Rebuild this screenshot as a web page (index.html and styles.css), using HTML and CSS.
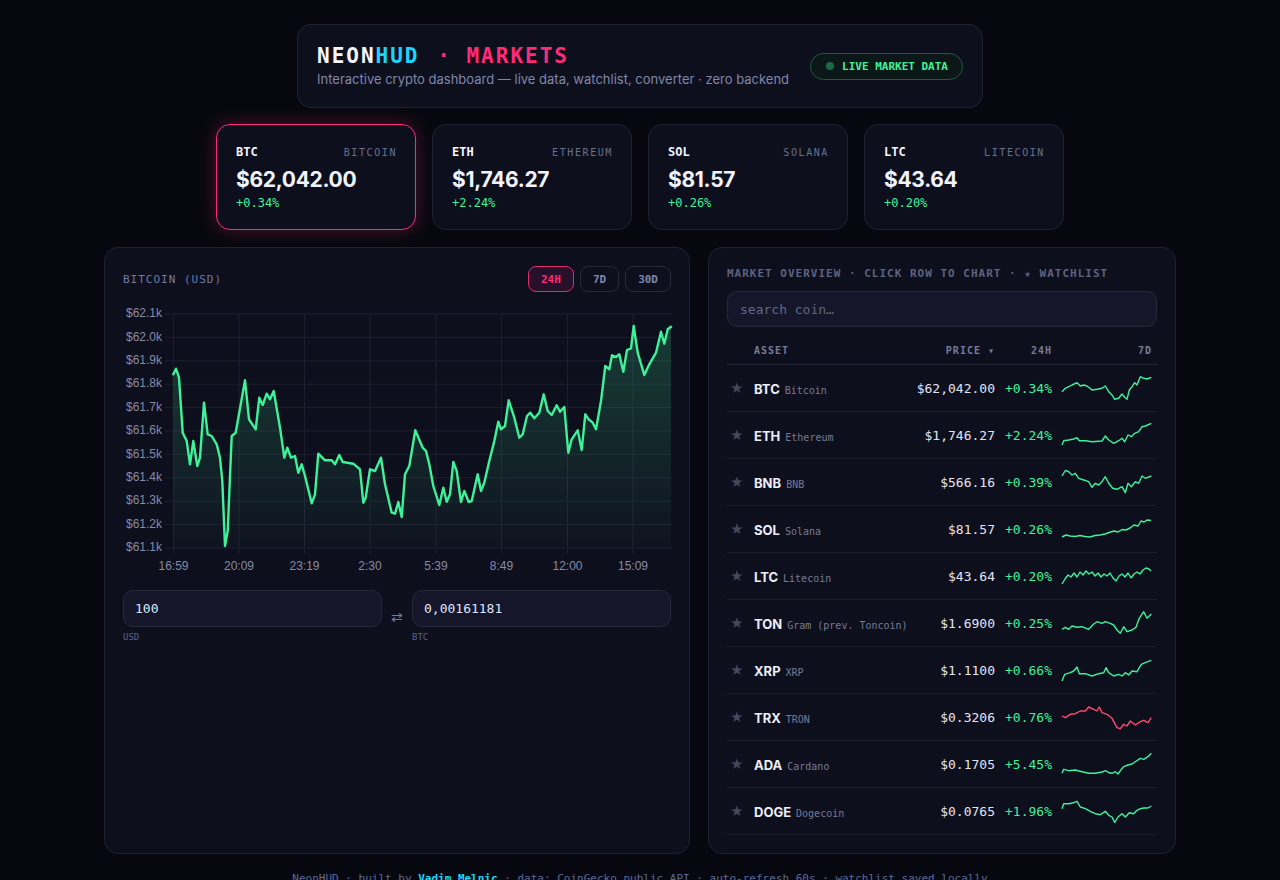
FILE: index.html
```html
<!DOCTYPE html>
<html lang="en">
<head>
  <meta charset="UTF-8">
  <meta name="viewport" content="width=device-width, initial-scale=1.0">
  <title>NeonHUD · Markets</title>
  <link rel="stylesheet" href="styles.css">
</head>
<body>
<div class="page">

  <header class="hud-head">
    <div class="head-text">
      <h1 class="brand"><span class="b-neon">NEON</span><span class="b-hud">HUD</span> <span class="b-mk">· MARKETS</span></h1>
      <p class="sub">Interactive crypto dashboard — live data, watchlist, converter · zero backend</p>
    </div>
    <div class="live"><span class="live-dot"></span>LIVE MARKET DATA</div>
  </header>

  <section class="tickers">
    <div class="tick active">
      <div class="tick-top"><span class="tick-sym">BTC</span><span class="tick-name">BITCOIN</span></div>
      <div class="tick-price">$62,042.00</div>
      <div class="tick-chg">+0.34%</div>
    </div>
    <div class="tick">
      <div class="tick-top"><span class="tick-sym">ETH</span><span class="tick-name">ETHEREUM</span></div>
      <div class="tick-price">$1,746.27</div>
      <div class="tick-chg">+2.24%</div>
    </div>
    <div class="tick">
      <div class="tick-top"><span class="tick-sym">SOL</span><span class="tick-name">SOLANA</span></div>
      <div class="tick-price">$81.57</div>
      <div class="tick-chg">+0.26%</div>
    </div>
    <div class="tick">
      <div class="tick-top"><span class="tick-sym">LTC</span><span class="tick-name">LITECOIN</span></div>
      <div class="tick-price">$43.64</div>
      <div class="tick-chg">+0.20%</div>
    </div>
  </section>

  <main class="panels">
    <section class="panel chart-panel">
      <div class="chart-head">
        <span class="chart-title">BITCOIN (USD)</span>
        <div class="ranges">
          <button class="rng on">24H</button>
          <button class="rng">7D</button>
          <button class="rng">30D</button>
        </div>
      </div>

      <svg class="chart" viewBox="122 300 550 280" width="550" height="280">
        <defs>
          <linearGradient id="area" x1="0" y1="0" x2="0" y2="1">
            <stop offset="0" stop-color="#3ef29a" stop-opacity="0.2"/>
            <stop offset="1" stop-color="#3ef29a" stop-opacity="0.02"/>
          </linearGradient>
        </defs>
        <g class="grid">
          <line x1="164" y1="313" x2="671" y2="313"/>
          <line x1="164" y1="336.4" x2="671" y2="336.4"/>
          <line x1="164" y1="359.8" x2="671" y2="359.8"/>
          <line x1="164" y1="383.2" x2="671" y2="383.2"/>
          <line x1="164" y1="406.6" x2="671" y2="406.6"/>
          <line x1="164" y1="430" x2="671" y2="430"/>
          <line x1="164" y1="453.4" x2="671" y2="453.4"/>
          <line x1="164" y1="476.8" x2="671" y2="476.8"/>
          <line x1="164" y1="500.2" x2="671" y2="500.2"/>
          <line x1="164" y1="523.6" x2="671" y2="523.6"/>
          <line x1="164" y1="547" x2="671" y2="547"/>
          <line x1="172.5" y1="313" x2="172.5" y2="553"/>
          <line x1="238" y1="313" x2="238" y2="553"/>
          <line x1="303.5" y1="313" x2="303.5" y2="553"/>
          <line x1="369" y1="313" x2="369" y2="553"/>
          <line x1="435" y1="313" x2="435" y2="553"/>
          <line x1="500.5" y1="313" x2="500.5" y2="553"/>
          <line x1="566.5" y1="313" x2="566.5" y2="553"/>
          <line x1="632" y1="313" x2="632" y2="553"/>
        </g>
        <g class="ylab">
          <text x="161" y="313">$62.1k</text>
          <text x="161" y="336.4">$62.0k</text>
          <text x="161" y="359.8">$61.9k</text>
          <text x="161" y="383.2">$61.8k</text>
          <text x="161" y="406.6">$61.7k</text>
          <text x="161" y="430">$61.6k</text>
          <text x="161" y="453.4">$61.5k</text>
          <text x="161" y="476.8">$61.4k</text>
          <text x="161" y="500.2">$61.3k</text>
          <text x="161" y="523.6">$61.2k</text>
          <text x="161" y="547">$61.1k</text>
        </g>
        <g class="xlab">
          <text x="172.5" y="566">16:59</text>
          <text x="238" y="566">20:09</text>
          <text x="303.5" y="566">23:19</text>
          <text x="369" y="566">2:30</text>
          <text x="435" y="566">5:39</text>
          <text x="500.5" y="566">8:49</text>
          <text x="566.5" y="566">12:00</text>
          <text x="632" y="566">15:09</text>
        </g>
        <polygon class="area" points="172.3,373.3 175,367.7 178,376.7 181.7,431.7 185.7,440 189,463.3 192.3,440 196.3,465 199,456.7 203,401.7 206.7,433.3 210.7,435 215.7,443.3 219,456.7 221.3,480 224,545 226.7,530 230.7,435 234.7,431.7 244,379.3 248,418.3 254.7,428.3 258.3,396.7 261.7,404 265.7,392.7 269,398.3 272.7,390 279,426.7 283.3,456.7 286.3,446.7 290,456.7 294,455 297.3,471.7 300.7,463.3 304,475 310.7,502.3 314,493.3 317.3,452.7 324,459.3 330.7,459.3 334,463.3 338.3,454 341.7,461 352.3,462.7 359,468.3 362.3,501.7 364.7,496.7 369,468.3 374,470 380,456.7 384,483.3 390.7,511.7 394,512.7 397.3,501 400.7,516 404,473.3 408.3,465 414.3,429.3 421.7,446.7 425,450 428.3,463.3 432.3,485 438.3,504 442.3,486.7 445.7,500.7 449,493.3 452.3,461 455.7,470 460,501 463.3,490 467.7,501 470.7,500 476.7,473.3 480,490 483.3,481.7 488.3,460 493.3,440 497.3,420.7 500,428.3 504,425 507.7,399.3 513.3,416.7 518.3,436.7 521.7,433.3 526,415 529.3,411.7 533.3,417.3 538.3,411.7 542.7,393.3 546.7,410 550.7,414 555.7,404.3 559,410.7 563.3,406 567.3,451.7 570.7,438.3 576.7,429.3 580.7,449 584.3,413.3 587.7,418.3 591.7,421.7 595,428.3 600,400 604.3,365 608.3,368.3 611,354.3 615,356 618.3,353.3 622.3,370.7 626,349 630,347.3 632.7,325 636.7,351.7 643.3,374 648.3,363.3 655,351.7 660,330.7 663.3,342.7 666.7,328.3 670,325.7 670,547 172.3,547"/>
        <polyline class="line" points="172.3,373.3 175,367.7 178,376.7 181.7,431.7 185.7,440 189,463.3 192.3,440 196.3,465 199,456.7 203,401.7 206.7,433.3 210.7,435 215.7,443.3 219,456.7 221.3,480 224,545 226.7,530 230.7,435 234.7,431.7 244,379.3 248,418.3 254.7,428.3 258.3,396.7 261.7,404 265.7,392.7 269,398.3 272.7,390 279,426.7 283.3,456.7 286.3,446.7 290,456.7 294,455 297.3,471.7 300.7,463.3 304,475 310.7,502.3 314,493.3 317.3,452.7 324,459.3 330.7,459.3 334,463.3 338.3,454 341.7,461 352.3,462.7 359,468.3 362.3,501.7 364.7,496.7 369,468.3 374,470 380,456.7 384,483.3 390.7,511.7 394,512.7 397.3,501 400.7,516 404,473.3 408.3,465 414.3,429.3 421.7,446.7 425,450 428.3,463.3 432.3,485 438.3,504 442.3,486.7 445.7,500.7 449,493.3 452.3,461 455.7,470 460,501 463.3,490 467.7,501 470.7,500 476.7,473.3 480,490 483.3,481.7 488.3,460 493.3,440 497.3,420.7 500,428.3 504,425 507.7,399.3 513.3,416.7 518.3,436.7 521.7,433.3 526,415 529.3,411.7 533.3,417.3 538.3,411.7 542.7,393.3 546.7,410 550.7,414 555.7,404.3 559,410.7 563.3,406 567.3,451.7 570.7,438.3 576.7,429.3 580.7,449 584.3,413.3 587.7,418.3 591.7,421.7 595,428.3 600,400 604.3,365 608.3,368.3 611,354.3 615,356 618.3,353.3 622.3,370.7 626,349 630,347.3 632.7,325 636.7,351.7 643.3,374 648.3,363.3 655,351.7 660,330.7 663.3,342.7 666.7,328.3 670,325.7"/>
      </svg>

      <div class="convert">
        <input class="cv-in" type="text" value="100">
        <span class="swap">⇄</span>
        <input class="cv-in" type="text" value="0,00161181">
        <label class="cv-lab">USD</label>
        <span></span>
        <label class="cv-lab">BTC</label>
      </div>
    </section>

    <section class="panel market-panel">
      <div class="mk-title">MARKET OVERVIEW · CLICK ROW TO CHART · ★ WATCHLIST</div>
      <input class="search" type="text" placeholder="search coin…">

      <div class="mk-table">
        <div class="mk-row mk-head">
          <span></span>
          <span>ASSET</span>
          <span class="r">PRICE ▾</span>
          <span class="r">24H</span>
          <span class="r">7D</span>
        </div>

        <div class="mk-row">
          <span class="star">★</span>
          <span class="asset"><b>BTC</b><i>Bitcoin</i></span>
          <span class="price">$62,042.00</span>
          <span class="chg">+0.34%</span>
          <span class="spark"><svg viewBox="0 0 90 24" width="90" height="24"><polyline points="0,15.7 3.3,12.3 6.7,10.7 10,9 15,6.7 18.3,10 21.7,9 25,10 30,14 35,13.3 40,12.3 43.3,10 46.7,15.7 50,19 52.7,23.3 56.7,22.3 60,18 62.7,21.3 65,23.3 67.3,14 70,10.7 72.7,6.7 75,9 78.3,0.7 81.7,2.3 85,3 89.3,1.3"/></svg></span>
        </div>
        <div class="mk-row">
          <span class="star">★</span>
          <span class="asset"><b>ETH</b><i>Ethereum</i></span>
          <span class="price">$1,746.27</span>
          <span class="chg">+2.24%</span>
          <span class="spark"><svg viewBox="0 0 90 24" width="90" height="24"><polyline points="0,22 1.7,17.7 6.7,17 11.7,16 15,14.7 17.3,17.7 23.3,17.7 30,18.7 40,18 43.3,13 46.7,17 51.7,20.3 56.7,17.7 60,15.3 62.7,18.7 66,12 69.3,13.7 72.7,10.3 76.7,8.7 80,3.7 83.3,3 89.3,0.3"/></svg></span>
        </div>
        <div class="mk-row">
          <span class="star">★</span>
          <span class="asset"><b>BNB</b><i>BNB</i></span>
          <span class="price">$566.16</span>
          <span class="chg">+0.39%</span>
          <span class="spark"><svg viewBox="0 0 90 24" width="90" height="24"><polyline points="0,6 3.3,0.5 6.7,1.7 10,5 13.3,3.3 16.7,8.3 21.7,10 26.7,11.7 30,17.3 33.3,13.3 36.7,15 40,11.7 43.3,6.7 46.7,13.3 50.7,18.3 55,19.3 60,16.7 63.3,22.7 66,13.3 69.3,16.7 73.3,11.7 76.7,13.3 80,6 83.3,8.3 89.3,6"/></svg></span>
        </div>
        <div class="mk-row">
          <span class="star">★</span>
          <span class="asset"><b>SOL</b><i>Solana</i></span>
          <span class="price">$81.57</span>
          <span class="chg">+0.26%</span>
          <span class="spark"><svg viewBox="0 0 90 24" width="90" height="24"><polyline points="0,20 4,18 8,19 13,19.5 18,18.5 23,19.5 28,20 33,18.5 38,18 43,17 47,15.5 52,14 56,15 60,12.5 64,13 68,11 72,8 76,9 79,4 82,5 85,3 89,3.5"/></svg></span>
        </div>
        <div class="mk-row">
          <span class="star">★</span>
          <span class="asset"><b>LTC</b><i>Litecoin</i></span>
          <span class="price">$43.64</span>
          <span class="chg">+0.20%</span>
          <span class="spark"><svg viewBox="0 0 90 24" width="90" height="24"><polyline points="0,20 3,15 6,11 9,13 12,9 15,13 18,8 21,11 24,7 27,10 30,8 33,12 36,9 39,13 42,10 45,12 48,9 51,14 54,17 57,12 60,10 63,13 66,9 69,14 72,10 75,8 78,10 81,6 84,4 87,5 89,7"/></svg></span>
        </div>
        <div class="mk-row">
          <span class="star">★</span>
          <span class="asset"><b>TON</b><i>Gram (prev. Toncoin)</i></span>
          <span class="price">$1.6900</span>
          <span class="chg">+0.25%</span>
          <span class="spark"><svg viewBox="0 0 90 24" width="90" height="24"><polyline points="0,18.3 3.3,16.3 6.7,18.3 10,15 15,16.3 20,15.7 26.7,18.3 31.7,13 35,10.7 40,12.3 43.3,10.7 48.3,12.3 51.7,14 55,19 58.3,22.3 61.7,15.7 65,20.7 70,19 74,16.3 77.3,7.3 81.7,0.7 85,7.3 89.3,3"/></svg></span>
        </div>
        <div class="mk-row">
          <span class="star">★</span>
          <span class="asset"><b>XRP</b><i>XRP</i></span>
          <span class="price">$1.1100</span>
          <span class="chg">+0.66%</span>
          <span class="spark"><svg viewBox="0 0 90 24" width="90" height="24"><polyline points="0,23 2.7,16.3 8.3,14.7 11.7,13 15,9 17.3,15.7 23.3,15.7 30,18 36.7,15.7 41.7,14.7 44,9.7 46.7,14.7 51.7,18 56.7,16.3 60,18 63.3,14.7 66.7,17 70,13 75,13.7 79.3,6.3 83.3,4.7 89.3,2.3"/></svg></span>
        </div>
        <div class="mk-row">
          <span class="star">★</span>
          <span class="asset"><b>TRX</b><i>TRON</i></span>
          <span class="price">$0.3206</span>
          <span class="chg">+0.76%</span>
          <span class="spark down"><svg viewBox="0 0 90 24" width="90" height="24"><polyline points="0,11 3.3,12.7 8.3,9.3 13.3,8.7 18.3,6 23.3,6 26.7,2 31.7,4.3 35,6 37.3,2 40,7.7 45,9.3 50,13.3 55,22.7 58.3,23.7 61.7,19.3 65,21 68.3,16 73.3,20 78.3,16.7 81.7,15.3 86,17.7 89.3,12.7"/></svg></span>
        </div>
        <div class="mk-row">
          <span class="star">★</span>
          <span class="asset"><b>ADA</b><i>Cardano</i></span>
          <span class="price">$0.1705</span>
          <span class="chg">+5.45%</span>
          <span class="spark"><svg viewBox="0 0 90 24" width="90" height="24"><polyline points="0,21.3 1.7,17.3 6.7,18.7 13.3,18 20,19.7 26.7,21.3 33.3,21.3 40,20 44,18.7 46.7,20.7 50,21.3 53.3,19.7 56,22 59.3,17.3 61.7,14.7 66,13 70,12 73.3,9.7 78.3,6.3 81.7,7.3 86,4.7 89.3,1.3"/></svg></span>
        </div>
        <div class="mk-row">
          <span class="star">★</span>
          <span class="asset"><b>DOGE</b><i>Dogecoin</i></span>
          <span class="price">$0.0765</span>
          <span class="chg">+1.96%</span>
          <span class="spark"><svg viewBox="0 0 90 24" width="90" height="24"><polyline points="0,9.7 1.7,4.7 6.7,4.7 11.7,3.7 15,2.3 18.3,8 23.3,9.7 28.3,12.3 33.3,14.7 38.3,15.7 43.3,12.3 46.7,16.3 50,18 52.7,23.5 56,18 60,14.7 63.3,18 67.3,13.7 71.7,14.7 75,11.3 78.3,9.7 81.7,9 86,9 89.3,7"/></svg></span>
        </div>
      </div>
    </section>
  </main>

  <footer class="foot">NeonHUD · built by <b>Vadim Melnic</b> · data: CoinGecko public API · auto-refresh 60s · watchlist saved locally</footer>

</div>
</body>
</html>
```

FILE: styles.css
```css
body{
  margin:0;
  background-color:#07080f;
  color:#e4e6f4;
  font-family:Inter, "Noto Sans", sans-serif;
}
.page{
  padding-top:24px;
}

/* header */
.hud-head{
  width:686px;
  box-sizing:border-box;
  margin:0 auto;
  padding:20px 19px;
  display:flex;
  align-items:center;
  justify-content:space-between;
  background-color:#0e0f1d;
  border:1px solid #202233;
  border-radius:14px;
}
.brand{
  margin:0;
  font-family:"DejaVu Sans Mono", monospace;
  font-size:21px;
  font-weight:bold;
  letter-spacing:2px;
  line-height:22px;
}
.b-neon{ color:#f4f5ff; }
.b-hud{ color:#1ad6ff; }
.b-mk{ color:#ff2a78; margin-left:3px; }
.sub{
  margin:5px 0 0;
  font-size:13px;
  line-height:15px;
  color:#7f86a8;
}
.live{
  display:flex;
  align-items:center;
  height:25px;
  padding:0 14px 0 15px;
  border:1px solid #1f5a42;
  border-radius:14px;
  background-color:#0c1718;
  color:#3ef29a;
  font-family:"DejaVu Sans Mono", monospace;
  font-size:11px;
  font-weight:bold;
}
.live-dot{
  width:8px;
  height:8px;
  border-radius:50%;
  background-color:#1b6a45;
  margin-right:8px;
}

/* tickers */
.tickers{
  display:flex;
  justify-content:center;
  gap:16px;
  margin-top:16px;
}
.tick{
  width:200px;
  height:106px;
  box-sizing:border-box;
  padding:19px 18px 0 19px;
  background-color:#0e0f1d;
  border:1px solid #202233;
  border-radius:14px;
}
.tick.active{
  border-color:#ff2a78;
  box-shadow:0 0 18px rgba(255,42,120,0.28);
}
.tick-top{
  display:flex;
  justify-content:space-between;
  align-items:center;
  height:16px;
}
.tick-sym{
  font-family:"DejaVu Sans Mono", monospace;
  font-size:12px;
  font-weight:bold;
  color:#f4f5ff;
}
.tick-name{
  font-family:"DejaVu Sans Mono", monospace;
  font-size:10px;
  letter-spacing:1.6px;
  color:#66708f;
}
.tick-price{
  margin-top:7px;
  font-size:21px;
  font-weight:700;
  line-height:26px;
  color:#f2f3ff;
  letter-spacing:-0.3px;
}
.tick-chg{
  margin-top:3px;
  font-family:"DejaVu Sans Mono", monospace;
  font-size:12px;
  color:#3ef29a;
}

/* panels */
.panels{
  width:1072px;
  margin:17px auto 0;
  display:grid;
  grid-template-columns:586px 468px;
  gap:18px;
  align-items:stretch;
}
.panel{
  box-sizing:border-box;
  padding:18px;
  background-color:#0e0f1d;
  border:1px solid #202233;
  border-radius:14px;
}
.chart-head{
  display:flex;
  justify-content:space-between;
  align-items:center;
  height:26px;
}
.chart-title{
  font-family:"DejaVu Sans Mono", monospace;
  font-size:11px;
  letter-spacing:1px;
  color:#7079a8;
}
.ranges{
  display:flex;
  gap:6px;
}
.rng{
  height:26px;
  padding:0 12px;
  background-color:transparent;
  border:1px solid #272939;
  border-radius:8px;
  color:#7d84ac;
  font-family:"DejaVu Sans Mono", monospace;
  font-size:11px;
  font-weight:bold;
}
.rng.on{
  border-color:#e02a6c;
  background-color:#26102a;
  color:#ff2a78;
}
.chart{
  display:block;
  margin-top:9px;
}
.grid line{
  stroke:#1d1f30;
  stroke-width:1;
}
.ylab text{
  font-family:"Liberation Sans", Arial, sans-serif;
  font-size:12px;
  fill:#868aa4;
  text-anchor:end;
  dominant-baseline:middle;
}
.xlab text{
  font-family:"Liberation Sans", Arial, sans-serif;
  font-size:12px;
  fill:#868aa4;
  text-anchor:middle;
  dominant-baseline:middle;
}
.area{
  fill:url(#area);
}
.line{
  fill:none;
  stroke:#3ef29a;
  stroke-width:2.4;
  stroke-linejoin:round;
  stroke-linecap:round;
}

/* converter */
.convert{
  display:grid;
  grid-template-columns:1fr 30px 1fr;
  margin-top:9px;
}
.cv-in{
  height:37px;
  box-sizing:border-box;
  width:100%;
  padding:0 11px;
  background-color:#15162a;
  border:1px solid #272939;
  border-radius:10px;
  color:#dfe6ff;
  font-family:"DejaVu Sans Mono", monospace;
  font-size:13px;
  outline:none;
}
.swap{
  align-self:end;
  text-align:center;
  color:#767c9c;
  font-size:14px;
  line-height:16px;
  margin-bottom:2px;
}
.cv-lab{
  margin-top:5px;
  font-family:"DejaVu Sans Mono", monospace;
  font-size:9px;
  color:#5a6190;
}

/* market table */
.mk-title{
  font-family:"DejaVu Sans Mono", monospace;
  font-size:11px;
  font-weight:bold;
  letter-spacing:1px;
  line-height:16px;
  color:#5d6280;
}
.search{
  display:block;
  width:100%;
  height:36px;
  box-sizing:border-box;
  margin-top:9px;
  padding:0 12px;
  background-color:#15162a;
  border:1px solid #272939;
  border-radius:10px;
  color:#dfe6ff;
  font-family:"DejaVu Sans Mono", monospace;
  font-size:13px;
  outline:none;
}
.search::placeholder{
  color:#626782;
}
.mk-table{
  margin-top:10px;
}
.mk-row{
  display:grid;
  grid-template-columns:24px minmax(0,1fr) 100px 57px 100px;
  align-items:center;
  height:47px;
  box-sizing:border-box;
  padding-right:5px;
  padding-left:3px;
  border-bottom:1px solid #1b1d2c;
  white-space:nowrap;
}
.mk-row.mk-head{
  height:28px;
  border-bottom-color:#232536;
  font-family:"DejaVu Sans Mono", monospace;
  font-size:10px;
  font-weight:bold;
  letter-spacing:1px;
  color:#767b98;
}
.mk-head .r{
  text-align:right;
}
.star{
  text-align:left;
  color:#45485c;
  font-size:13px;
}
.asset b{
  font-size:13px;
  font-weight:700;
  color:#eceef8;
}
.asset i{
  font-style:normal;
  margin-left:5px;
  font-family:"DejaVu Sans Mono", monospace;
  font-size:10px;
  color:#757a96;
}
.price{
  text-align:right;
  font-family:"DejaVu Sans Mono", monospace;
  font-size:13px;
  color:#e2e4f2;
}
.chg{
  text-align:right;
  font-family:"DejaVu Sans Mono", monospace;
  font-size:13px;
  color:#3ef29a;
}
.spark{
  display:flex;
  justify-content:flex-end;
}
.spark svg{
  display:block;
  overflow:visible;
}
.spark polyline{
  fill:none;
  stroke:#3ef29a;
  stroke-width:1.4;
  stroke-linejoin:round;
}
.spark.down polyline{
  stroke:#ff4a6e;
}

.foot{
  margin-top:18px;
  text-align:center;
  font-family:"DejaVu Sans Mono", monospace;
  font-size:11px;
  color:#5b6a98;
}
.foot b{
  color:#1ad6ff;
}
```
